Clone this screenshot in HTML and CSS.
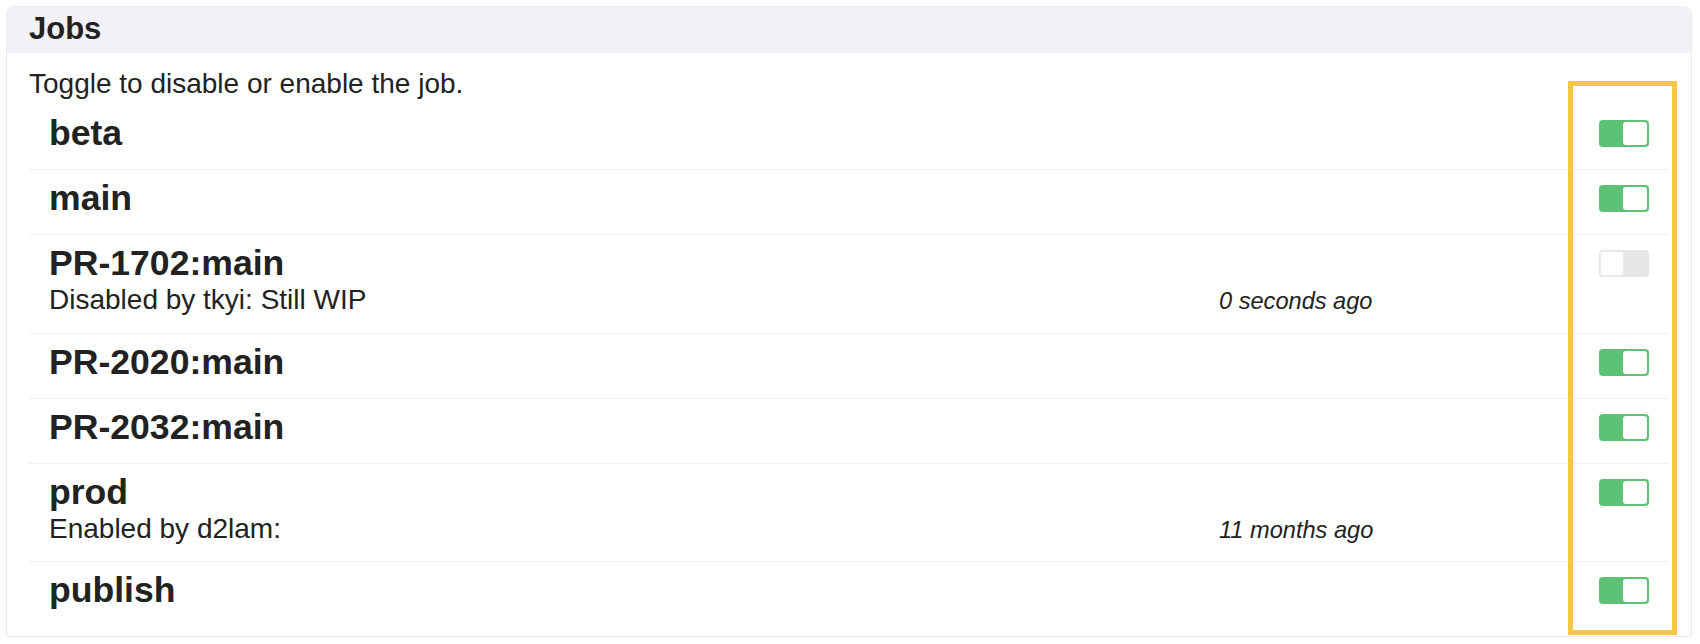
FILE: index.html
```html
<!DOCTYPE html>
<html lang="en">
<head>
<meta charset="utf-8">
<title>Jobs</title>
<link rel="stylesheet" href="styles.css">
</head>
<body>
<div class="page">
  <section class="panel">
    <header class="panel-head">Jobs</header>
    <div class="panel-body">
      <p class="intro">Toggle to disable or enable the job.</p>
      <ul class="jobs">
        <li class="job">
          <div class="job-main"><div class="job-name">beta</div></div>
          <span class="toggle on"><span class="knob"></span></span>
        </li>
        <li class="job">
          <div class="job-main"><div class="job-name">main</div></div>
          <span class="toggle on"><span class="knob"></span></span>
        </li>
        <li class="job">
          <div class="job-main">
            <div class="job-name">PR-1702:main</div>
            <div class="job-detail"><span>Disabled by tkyi: Still WIP</span><em class="stamp">0 seconds ago</em></div>
          </div>
          <span class="toggle off"><span class="knob"></span></span>
        </li>
        <li class="job">
          <div class="job-main"><div class="job-name">PR-2020:main</div></div>
          <span class="toggle on"><span class="knob"></span></span>
        </li>
        <li class="job">
          <div class="job-main"><div class="job-name">PR-2032:main</div></div>
          <span class="toggle on"><span class="knob"></span></span>
        </li>
        <li class="job">
          <div class="job-main">
            <div class="job-name">prod</div>
            <div class="job-detail"><span>Enabled by d2lam:</span><em class="stamp">11 months ago</em></div>
          </div>
          <span class="toggle on"><span class="knob"></span></span>
        </li>
        <li class="job">
          <div class="job-main"><div class="job-name">publish</div></div>
          <span class="toggle on"><span class="knob"></span></span>
        </li>
      </ul>
    </div>
    <div class="highlight"></div>
  </section>
</div>
</body>
</html>
```

FILE: styles.css
```css
* { box-sizing: border-box; }
html, body { margin: 0; padding: 0; background: #ffffff; }
body {
  font-family: "Liberation Sans", Arial, Helvetica, sans-serif;
  color: #222222;
}
.page { padding: 6px 8px 6px 6px; }
.panel {
  position: relative;
  border: 1px solid #e9e9ef;
  border-radius: 8px 8px 2px 2px;
  background: #ffffff;
}
.panel-head {
  background: #f1f1f6;
  border-radius: 7px 7px 0 0;
  font-size: 31px;
  font-weight: bold;
  line-height: 42px;
  padding: 1px 22px 3px;
}
.panel-body { padding: 14px 22px 10px; }
.intro {
  margin: 0 0 3px;
  font-size: 28px;
  line-height: 34px;
}
.jobs { list-style: none; margin: 0; padding: 0; }
.job {
  display: grid;
  grid-template-columns: 1fr 50px;
  align-items: start;
  padding: 7px 20px 15px;
  border-top: 1px solid #eeeef3;
}
.job:first-child { border-top: 1px solid transparent; }
.job-name {
  font-size: 35.6px;
  font-weight: bold;
  line-height: 42px;
}
.job-detail {
  display: grid;
  grid-template-columns: 1fr 380px;
  align-items: baseline;
  font-size: 28px;
  line-height: 32.6px;
}
.stamp { font-size: 23.6px; font-style: italic; }
.toggle {
  display: flex;
  width: 50px;
  height: 27px;
  margin-top: 8px;
  padding: 2px;
  border-radius: 4px;
}
.toggle .knob {
  width: 24px;
  height: 23px;
  border-radius: 3px;
  background: #ffffff;
}
.toggle.on { background: #5dc274; justify-content: flex-end; }
.toggle.off { background: #e6e6e6; justify-content: flex-start; padding: 1px; }
.toggle.off .knob { height: 25px; border: 1px solid #ececec; }
.highlight {
  position: absolute;
  left: 1561px;
  top: 74px;
  width: 109px;
  height: 554px;
  border: 5px solid #f6c744;
  pointer-events: none;
}
```
